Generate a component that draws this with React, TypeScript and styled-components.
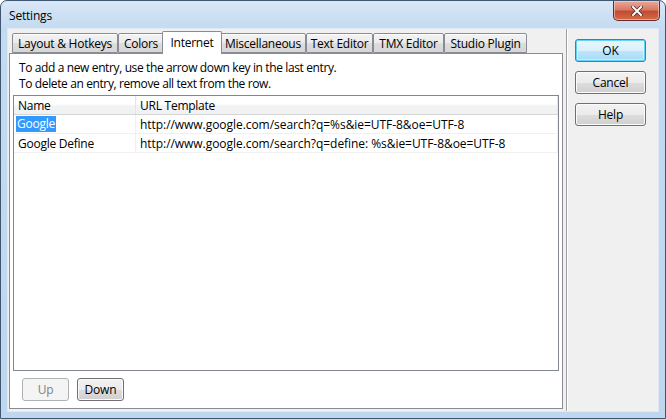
import React from "react";
import styled, { createGlobalStyle } from "styled-components";

const GlobalStyle = createGlobalStyle`
  html, body { margin: 0; padding: 0; background: #ffffff; }
  body {
    font-family: "Open Sans", "Noto Sans", "Liberation Sans", sans-serif;
    font-size: 12px;
    color: #000;
  }
  * { box-sizing: border-box; }
`;

const Window = styled.div`
  width: 666px;
  height: 419px;
  display: flex;
  flex-direction: column;
  background: linear-gradient(#d8e7f6 0px, #c4daf0 28px, #bfd6ef 100%);
  border: 1px solid #3e5671;
  border-radius: 7px 7px 0 0;
  padding: 0 7px 7px 7px;
  overflow: hidden;
`;

const TitleBar = styled.div`
  height: 28px;
  display: flex;
  align-items: center;
  padding-left: 1px;
  flex-shrink: 0;
`;

const Title = styled.span`
  font-size: 12px;
  letter-spacing: -0.2px;
  color: #000;
  margin-top: 1px;
`;

const CloseButton = styled.div`
  margin-left: auto;
  margin-right: -2px;
  align-self: flex-start;
  width: 47px;
  height: 20px;
  border: 1px solid #6b2a24;
  border-top: none;
  border-radius: 0 0 5px 5px;
  background: linear-gradient(#e9a99c 0%, #d77a66 45%, #c44c32 55%, #d16c48 100%);
  box-shadow: inset 0 0 0 1px rgba(255, 220, 210, 0.55);
  display: flex;
  align-items: center;
  justify-content: center;
`;

const Client = styled.div`
  flex: 1;
  display: flex;
  background: #f0f0f0;
  box-shadow: 0 0 0 1px #dfe9f4;
`;

const LeftPanel = styled.div`
  width: 558px;
  display: flex;
  flex-direction: column;
  padding: 2px 3px 2px 1px;
`;

const TabStrip = styled.div`
  display: flex;
  align-items: flex-end;
  height: 22px;
  padding-left: 3px;
  position: relative;
  z-index: 1;
`;

const Tab = styled.div<{ $w: number; $active?: boolean }>`
  width: ${(p) => (p.$active ? p.$w + 4 : p.$w)}px;
  height: ${(p) => (p.$active ? 23 : 20)}px;
  margin: 0 ${(p) => (p.$active ? -2 : 0)}px ${(p) => (p.$active ? -1 : 0)}px;
  border: 1px solid #898c95;
  border-bottom: ${(p) => (p.$active ? "none" : "1px solid #898c95")};
  border-radius: 2px 2px 0 0;
  background: ${(p) =>
    p.$active ? "#ffffff" : "linear-gradient(#f3f3f3 0%, #ebebeb 50%, #dddddd 51%, #d6d6d6 100%)"};
  display: flex;
  align-items: ${(p) => (p.$active ? "flex-start" : "center")};
  padding-top: ${(p) => (p.$active ? 2 : 0)}px;
  justify-content: center;
  font-size: 12px;
  letter-spacing: -0.25px;
  white-space: nowrap;
  position: relative;
  z-index: ${(p) => (p.$active ? 2 : 1)};
  box-shadow: ${(p) => (p.$active ? "none" : "inset 0 1px 0 #ffffff")};
`;

const TabPage = styled.div`
  flex: 1;
  background: #ffffff;
  border: 1px solid #898c95;
  padding: 6px 3px 7px 3px;
  display: flex;
  flex-direction: column;
`;

const Instructions = styled.div`
  padding-left: 6px;
  line-height: 16px;
  font-size: 12px;
  letter-spacing: -0.38px;
  margin-bottom: 3px;
`;

const Grid = styled.div`
  flex: 1;
  border: 1px solid #828790;
  background: #ffffff;
  display: flex;
  flex-direction: column;
`;

const Row = styled.div<{ $header?: boolean }>`
  display: flex;
  height: 19px;
  border-bottom: 1px solid ${(p) => (p.$header ? "#d5d5d5" : "#f0f0f0")};
  background: ${(p) =>
    p.$header ? "linear-gradient(#ffffff 0%, #ffffff 45%, #f2f3f5 55%, #f0f1f3 100%)" : "#ffffff"};
`;

const Cell = styled.div<{ $w?: number; $header?: boolean; $ls?: number }>`
  ${(p) => (p.$w ? `width: ${p.$w}px; flex-shrink: 0;` : "flex: 1;")}
  border-right: 1px solid ${(p) => (p.$header ? "#e3e4e8" : "#f0f0f0")};
  padding-left: 4px;
  display: flex;
  align-items: center;
  font-size: 12px;
  letter-spacing: ${(p) => (p.$ls ?? -0.25)}px;
  white-space: pre;
  overflow: hidden;
`;

const Selected = styled.span`
  background: #3399ff;
  color: #ffffff;
  margin-left: -2px;
  padding: 0 1px;
  line-height: 16px;
`;

const ButtonRow = styled.div`
  display: flex;
  gap: 8px;
  padding-left: 9px;
  margin-top: 7px;
`;

const Button = styled.button<{ $w: number; $default?: boolean }>`
  width: ${(p) => p.$w}px;
  height: 23px;
  font-family: inherit;
  font-size: 12px;
  letter-spacing: -0.2px;
  padding: 0;
  color: #000;
  border-radius: 3px;
  border: 1px solid ${(p) => (p.$default ? "#3c7fb1" : "#707070")};
  background: ${(p) =>
    p.$default
      ? "linear-gradient(#eaf6fd 0%, #d9f0fc 50%, #bee6fd 51%, #a7d9f5 100%)"
      : "linear-gradient(#f2f2f2 0%, #ebebeb 50%, #dddddd 51%, #cfcfcf 100%)"};
  box-shadow: ${(p) =>
    p.$default ? "inset 0 0 0 1px #5fd3f8, inset 0 0 0 2px rgba(255,255,255,0.4)" : "inset 0 0 0 1px #fbfbfb"};

  &:disabled {
    border-color: #adb2b5;
    background: #f4f4f4;
    color: #838383;
    box-shadow: none;
  }
`;

const RightPanel = styled.div`
  flex: 1;
  border-left: 1px solid #a0a0a0;
  box-shadow: inset 1px 0 0 #ffffff;
  padding: 10px 0 0 8px;
  display: flex;
  flex-direction: column;
  gap: 9px;
`;

const tabs: { label: string; w: number }[] = [
  { label: "Layout & Hotkeys", w: 106 },
  { label: "Colors", w: 46 },
  { label: "Internet", w: 56 },
  { label: "Miscellaneous", w: 86 },
  { label: "Text Editor", w: 67 },
  { label: "TMX Editor", w: 71 },
  { label: "Studio Plugin", w: 83 },
];

const rows = [
  { name: "Google", url: "http://www.google.com/search?q=%s&ie=UTF-8&oe=UTF-8", sel: true },
  { name: "Google Define", url: "http://www.google.com/search?q=define: %s&ie=UTF-8&oe=UTF-8", sel: false },
];

export default function App() {
  return (
    <>
      <GlobalStyle />
      <Window>
        <TitleBar>
          <Title>Settings</Title>
          <CloseButton>
            <svg width="12" height="10" viewBox="0 0 12 10">
              <path d="M2 1 L10 9 M10 1 L2 9" stroke="#4a2a26" strokeWidth="3.4" strokeLinecap="square" />
              <path d="M2 1 L10 9 M10 1 L2 9" stroke="#ffffff" strokeWidth="2" strokeLinecap="square" />
            </svg>
          </CloseButton>
        </TitleBar>
        <Client>
          <LeftPanel>
            <TabStrip>
              {tabs.map((t) => (
                <Tab key={t.label} $w={t.w} $active={t.label === "Internet"}>
                  {t.label}
                </Tab>
              ))}
            </TabStrip>
            <TabPage>
              <Instructions>
                To add a new entry, use the arrow down key in the last entry.
                <br />
                To delete an entry, remove all text from the row.
              </Instructions>
              <Grid>
                <Row $header>
                  <Cell $w={122} $header>Name</Cell>
                  <Cell $header>URL Template</Cell>
                </Row>
                {rows.map((r) => (
                  <Row key={r.name}>
                    <Cell $w={122}>{r.sel ? <Selected>{r.name}</Selected> : r.name}</Cell>
                    <Cell $ls={-0.05}>{r.url}</Cell>
                  </Row>
                ))}
              </Grid>
              <ButtonRow>
                <Button $w={47} disabled>Up</Button>
                <Button $w={47}>Down</Button>
              </ButtonRow>
            </TabPage>
          </LeftPanel>
          <RightPanel>
            <Button $w={71} $default>OK</Button>
            <Button $w={71}>Cancel</Button>
            <Button $w={71}>Help</Button>
          </RightPanel>
        </Client>
      </Window>
    </>
  );
}
